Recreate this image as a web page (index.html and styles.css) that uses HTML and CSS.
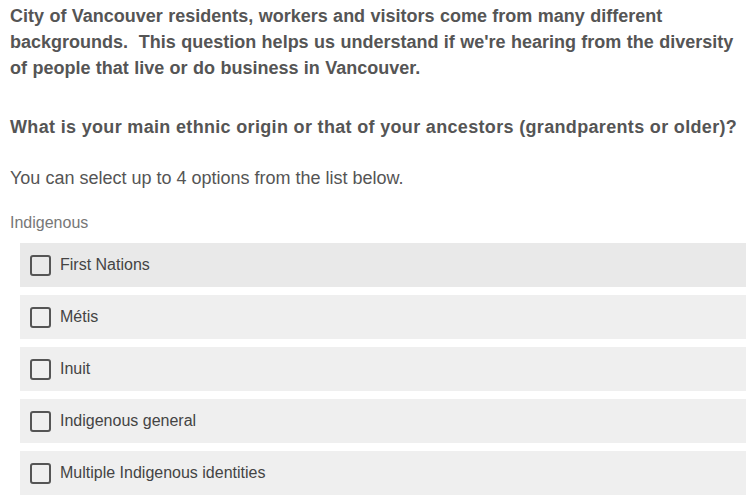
FILE: index.html
```html
<!DOCTYPE html>
<html lang="en">
<head>
<meta charset="utf-8">
<link rel="stylesheet" href="styles.css">
</head>
<body>
<div class="survey">
  <p class="intro">City of Vancouver residents, workers and visitors come from many different backgrounds.&nbsp; This question helps us understand if we're hearing from the diversity of people that live or do business in Vancouver.</p>
  <p class="question">What is your main ethnic origin or that of your ancestors (grandparents or older)?</p>
  <p class="hint">You can select up to 4 options from the list below.</p>
  <div class="group-label">Indigenous</div>
  <ul class="options">
    <li class="option option-hover"><span class="box"></span><span class="label">First Nations</span></li>
    <li class="option"><span class="box"></span><span class="label">Métis</span></li>
    <li class="option"><span class="box"></span><span class="label">Inuit</span></li>
    <li class="option"><span class="box"></span><span class="label">Indigenous general</span></li>
    <li class="option"><span class="box"></span><span class="label">Multiple Indigenous identities</span></li>
  </ul>
</div>
</body>
</html>
```

FILE: styles.css
```css
html, body {
  margin: 0;
  padding: 0;
  background: #ffffff;
}
body {
  font-family: "Liberation Sans", Arial, Helvetica, sans-serif;
  color: #555555;
}
.survey {
  padding: 3px 9px 0 10px;
}
.intro, .question {
  margin: 0;
  font-size: 18px;
  font-weight: bold;
  line-height: 26px;
  color: #555555;
}
.intro {
  word-spacing: 0.4px;
}
.question {
  margin-top: 33px;
  letter-spacing: 0.33px;
}
.hint {
  margin: 26px 0 0;
  font-size: 18px;
  line-height: 24px;
  color: #555555;
}
.group-label {
  margin-top: 22px;
  font-size: 16px;
  line-height: 22px;
  color: #777777;
}
.options {
  list-style: none;
  margin: 9px 0 0 10px;
  padding: 0;
  display: flex;
  flex-direction: column;
  gap: 8px;
}
.option {
  height: 44px;
  background: #efefef;
  display: flex;
  align-items: center;
  padding-left: 10px;
  gap: 9px;
}
.option-hover {
  background: #e9e9e9;
}
.box {
  width: 17px;
  height: 17px;
  border: 2px solid #555555;
  border-radius: 3px;
  flex: none;
}
.label {
  font-size: 16px;
  color: #444444;
}
```
